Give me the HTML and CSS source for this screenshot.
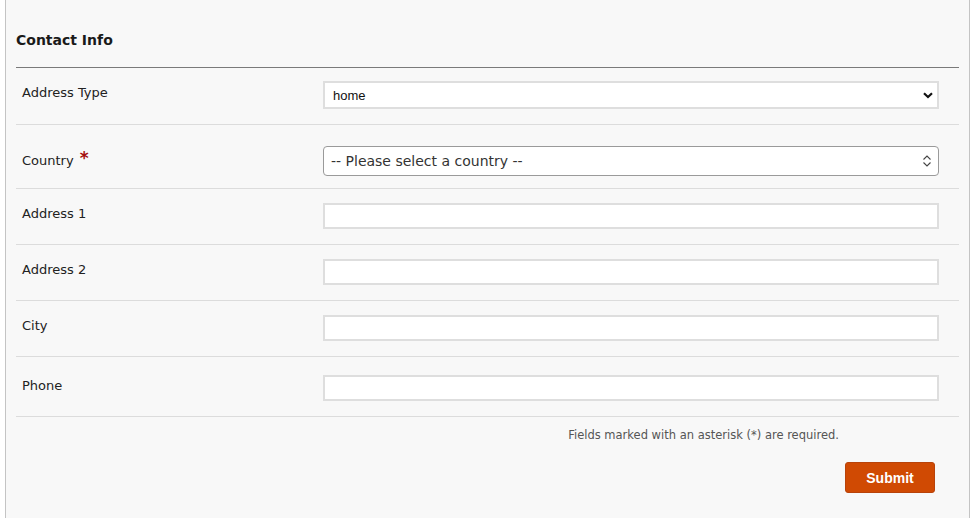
FILE: index.html
```html
<!DOCTYPE html>
<html lang="en">
<head>
<meta charset="utf-8">
<title>Contact Info</title>
<link rel="stylesheet" href="styles.css">
</head>
<body>
<div class="panel">
  <h2 class="section-title">Contact Info</h2>
  <div class="form">
    <div class="row row-type">
      <label class="label">Address Type</label>
      <div class="field">
        <div class="select-wrap">
          <select class="select-plain"><option>home</option></select>
          <svg class="chev-down" width="10" height="7" viewBox="0 0 10 7"><path d="M1 1.2 L5 5 L9 1.2" fill="none" stroke="#111" stroke-width="2.2"/></svg>
        </div>
      </div>
    </div>
    <div class="row row-country">
      <label class="label">Country <span class="req">*</span></label>
      <div class="field">
        <div class="select-wrap">
          <select class="select-round"><option>-- Please select a country --</option></select>
          <svg class="chev-updown" width="10" height="12" viewBox="0 0 10 12"><path d="M1.5 4.5 L5 1 L8.5 4.5 M1.5 7.5 L5 11 L8.5 7.5" fill="none" stroke="#444" stroke-width="1.1"/></svg>
        </div>
      </div>
    </div>
    <div class="row">
      <label class="label">Address 1</label>
      <div class="field"><input class="text-input" type="text"></div>
    </div>
    <div class="row">
      <label class="label">Address 2</label>
      <div class="field"><input class="text-input" type="text"></div>
    </div>
    <div class="row">
      <label class="label">City</label>
      <div class="field"><input class="text-input" type="text"></div>
    </div>
    <div class="row row-phone">
      <label class="label">Phone</label>
      <div class="field"><input class="text-input" type="text"></div>
    </div>
    <p class="note">Fields marked with an asterisk (*) are required.</p>
    <div class="actions">
      <button class="submit" type="button">Submit</button>
    </div>
  </div>
</div>
</body>
</html>
```
FILE: styles.css
```css
html, body {
  margin: 0;
  padding: 0;
  background: #ffffff;
}
body {
  font-family: "DejaVu Sans", Verdana, sans-serif;
  color: #222;
}
.panel {
  margin-left: 5px;
  width: 965px;
  height: 518px;
  box-sizing: border-box;
  background: #f8f8f8;
  border-left: 1px solid #c4c4c4;
  border-right: 1px solid #c4c4c4;
  padding: 0 10px 0 10px;
}
.section-title {
  margin: 0;
  padding: 32px 0 18px 0;
  font-size: 14px;
  line-height: 17px;
  font-weight: bold;
  color: #1a1a1a;
  border-bottom: 1px solid #7a7a7a;
}
.row {
  display: flex;
  align-items: center;
  padding: 14px 20px 15px 6px;
  border-bottom: 1px solid #dcdcdc;
}
.row-type { padding-top: 13px; padding-bottom: 15px; }
.row-country { padding-top: 21px; padding-bottom: 12px; }
.row-phone { padding-top: 18px; padding-bottom: 15px; }
.label {
  width: 301px;
  flex: none;
  font-size: 13px;
  line-height: 16px;
  color: #222;
  padding-bottom: 4px;
}
.row-country .label { padding-bottom: 3px; }
.req {
  color: #a50d0d;
  font-size: 17px;
  font-weight: bold;
  position: relative;
  top: -1px;
  margin-left: 2px;
}
.field {
  flex: 1;
}
.select-wrap {
  position: relative;
}
.select-plain {
  appearance: none;
  -webkit-appearance: none;
  display: block;
  width: 100%;
  height: 28px;
  box-sizing: border-box;
  border: 2px solid #dedede;
  border-radius: 0;
  background: #fff;
  font-family: "Liberation Sans", Arial, sans-serif;
  font-size: 13px;
  color: #111;
  padding: 0 8px;
  margin: 0;
}
.chev-down {
  position: absolute;
  right: 6px;
  top: 11px;
}
.select-round {
  appearance: none;
  -webkit-appearance: none;
  display: block;
  width: 100%;
  height: 30px;
  box-sizing: border-box;
  border: 1px solid #9a9a9a;
  border-radius: 4px;
  background: #fff;
  font-family: "DejaVu Sans", Verdana, sans-serif;
  font-size: 14px;
  color: #333;
  padding: 0 7px;
  margin: 0;
}
.chev-updown {
  position: absolute;
  right: 7px;
  top: 9px;
}
.text-input {
  display: block;
  width: 100%;
  height: 26px;
  box-sizing: border-box;
  border: 2px solid #dedede;
  background: #fff;
  margin: 0;
  padding: 0 6px;
  font-family: "DejaVu Sans", Verdana, sans-serif;
  font-size: 13px;
}
.note {
  margin: 0;
  padding: 11px 120px 0 0;
  text-align: right;
  font-size: 11.5px;
  line-height: 14px;
  color: #555;
}
.actions {
  display: flex;
  justify-content: flex-end;
  padding: 20px 24px 0 0;
}
.submit {
  width: 90px;
  height: 31px;
  box-sizing: border-box;
  background: #d04a03;
  border: 1px solid #b8430a;
  border-radius: 3px;
  color: #fff;
  font-family: "Liberation Sans", Arial, sans-serif;
  font-weight: bold;
  font-size: 14px;
  padding: 0;
}
```
